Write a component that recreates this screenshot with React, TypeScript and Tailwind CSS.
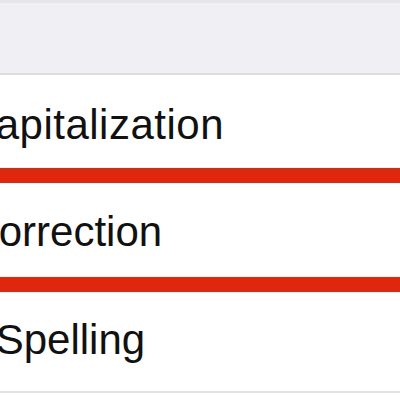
const ROWS = [
  { label: 'Auto-Capitalization', shift: '-ml-[138px] tracking-[0.5px]', pad: 'pt-[26px]', h: 'h-[92px]' },
  { label: 'Auto-Correction', shift: '-ml-[132px]', pad: 'pt-[24px]', h: 'h-[92px]' },
  { label: 'Check Spelling', shift: '-ml-[135px]', pad: 'pt-[23px]', h: 'h-[98px]' },
];

function Highlight() {
  return (
    <div className="h-[17px] shrink-0 bg-[#fbe9e4] py-px">
      <div className="h-full border-y border-[#b53a26] bg-[#e0260d]" />
    </div>
  );
}

export default function App() {
  return (
    <div
      className="flex h-[400px] w-[400px] flex-col overflow-hidden bg-white text-[42px] leading-[48px] text-[#111]"
      style={{ fontFamily: '"Liberation Sans", Arial, sans-serif' }}
    >
      {/* grouped table header */}
      <div className="h-[75px] shrink-0 border-t-[3px] border-b-2 border-t-[#e5e5ea] border-b-[#dcdce1] bg-[#efeff4]" />

      {ROWS.map((row, i) => (
        <div key={row.label} className="flex flex-col">
          {i > 0 && <Highlight />}
          <div className={`${row.h} ${row.pad} shrink-0 whitespace-nowrap`}>
            <span className={`block ${row.shift}`}>{row.label}</span>
          </div>
        </div>
      ))}

      <div className="h-[2px] shrink-0 bg-[#e2e2e6]" />
      <div className="flex-1 bg-white" />
    </div>
  );
}
